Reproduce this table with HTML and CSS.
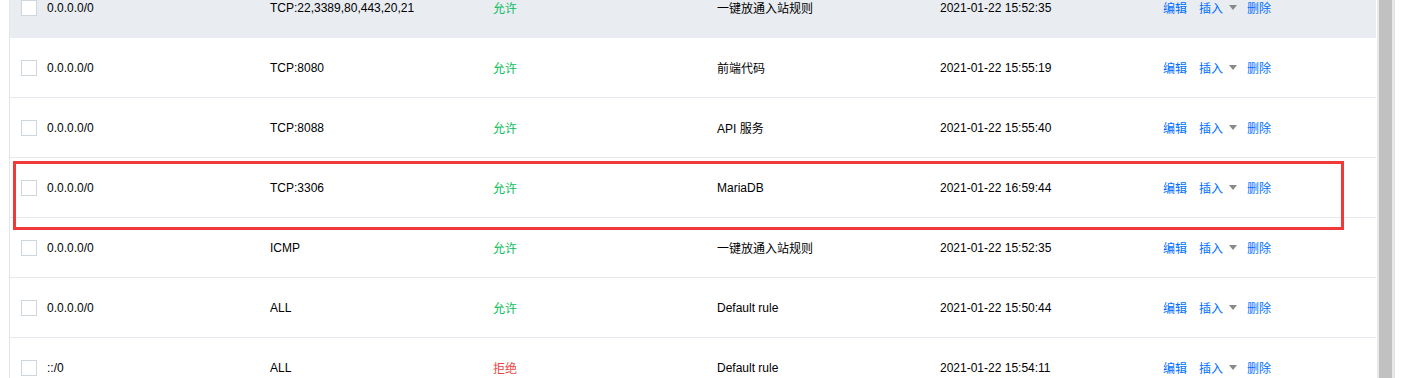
FILE: index.html
```html
<!DOCTYPE html>
<html lang="zh-CN">
    <head>
        <meta charset="UTF-8" />
        <meta name="viewport" content="width=device-width, initial-scale=1.0" />
        <title>安全组规则</title>
        <link rel="stylesheet" href="styles.css">
    </head>
    <body>
        <div class="page">
            <div class="panel">
                <div class="rules">
                    <div class="row hover">
                        <span class="check"></span>
                        <span>0.0.0.0/0</span>
                        <span>TCP:22,3389,80,443,20,21</span>
                        <span class="allow">允许</span>
                        <span>一键放通入站规则</span>
                        <span>2021-01-22 15:52:35</span>
                        <span class="ops"><a>编辑</a><a class="more">插入</a><i class="caret"></i><a>删除</a></span>
                    </div>
                    <div class="row">
                        <span class="check"></span>
                        <span>0.0.0.0/0</span>
                        <span>TCP:8080</span>
                        <span class="allow">允许</span>
                        <span>前端代码</span>
                        <span>2021-01-22 15:55:19</span>
                        <span class="ops"><a>编辑</a><a class="more">插入</a><i class="caret"></i><a>删除</a></span>
                    </div>
                    <div class="row">
                        <span class="check"></span>
                        <span>0.0.0.0/0</span>
                        <span>TCP:8088</span>
                        <span class="allow">允许</span>
                        <span>API 服务</span>
                        <span>2021-01-22 15:55:40</span>
                        <span class="ops"><a>编辑</a><a class="more">插入</a><i class="caret"></i><a>删除</a></span>
                    </div>
                    <div class="row marked">
                        <span class="check"></span>
                        <span>0.0.0.0/0</span>
                        <span>TCP:3306</span>
                        <span class="allow">允许</span>
                        <span>MariaDB</span>
                        <span>2021-01-22 16:59:44</span>
                        <span class="ops"><a>编辑</a><a class="more">插入</a><i class="caret"></i><a>删除</a></span>
                        <!-- highlight frame around the new rule -->
                        <div class="frame"></div>
                    </div>
                    <div class="row">
                        <span class="check"></span>
                        <span>0.0.0.0/0</span>
                        <span>ICMP</span>
                        <span class="allow">允许</span>
                        <span>一键放通入站规则</span>
                        <span>2021-01-22 15:52:35</span>
                        <span class="ops"><a>编辑</a><a class="more">插入</a><i class="caret"></i><a>删除</a></span>
                    </div>
                    <div class="row">
                        <span class="check"></span>
                        <span>0.0.0.0/0</span>
                        <span>ALL</span>
                        <span class="allow">允许</span>
                        <span>Default rule</span>
                        <span>2021-01-22 15:50:44</span>
                        <span class="ops"><a>编辑</a><a class="more">插入</a><i class="caret"></i><a>删除</a></span>
                    </div>
                    <div class="row">
                        <span class="check"></span>
                        <span>::/0</span>
                        <span>ALL</span>
                        <span class="deny">拒绝</span>
                        <span>Default rule</span>
                        <span>2021-01-22 15:54:11</span>
                        <span class="ops"><a>编辑</a><a class="more">插入</a><i class="caret"></i><a>删除</a></span>
                    </div>
                </div>
            </div>
            <div class="scrollbar"><div class="thumb"></div></div>
        </div>
    </body>
</html>
```

FILE: styles.css
```css
body {
    margin: 0;
    padding: 0;
    background-color: #fff;
    font-family: "Liberation Sans", Arial, "Noto Sans CJK SC", sans-serif;
    font-size: 12px;
    color: #000;
    overflow: hidden;
}
.page {
    display: flex;
    height: 378px;
    padding-left: 9px;
}
.panel {
    width: 1366px;
    border-left: 1px solid #e3e6eb;
    overflow: hidden;
}
.rules {
    margin-top: -22px;
}
.row {
    position: relative;
    display: grid;
    grid-template-columns: 26px 223px 223px 224px 223px 223px 1fr;
    align-items: center;
    height: 59px;
    padding-left: 11px;
    border-bottom: 1px solid #e5e8ed;
    background-color: #fff;
}
.row.hover {
    background-color: #e9ecf1;
    border-bottom-color: #e9ecf1;
}
.row.marked {
    z-index: 1;
}
.check {
    width: 14px;
    height: 14px;
    border: 1px solid #cfd5de;
    background-color: #fff;
}
.allow {
    color: #0abf5b;
}
.deny {
    color: #e54545;
}
.ops {
    display: flex;
    align-items: center;
}
.ops a {
    color: #006eff;
    cursor: pointer;
    margin-right: 12px;
}
.ops a.more {
    margin-right: 6px;
}
.caret {
    width: 0;
    height: 0;
    border-left: 4px solid transparent;
    border-right: 4px solid transparent;
    border-top: 5px solid #888;
    margin-right: 10px;
}
.frame {
    position: absolute;
    left: 3px;
    top: 3px;
    width: 1325px;
    height: 63px;
    border: 3px solid #f03a3a;
    pointer-events: none;
}
.scrollbar {
    width: 17px;
    margin-left: 1px;
    background-color: #e8e8e8;
    border-right: 1px solid #dfe3ea;
    display: flex;
    justify-content: center;
}
.thumb {
    width: 13px;
    height: 100%;
    background-color: #c1c1c1;
}
```
